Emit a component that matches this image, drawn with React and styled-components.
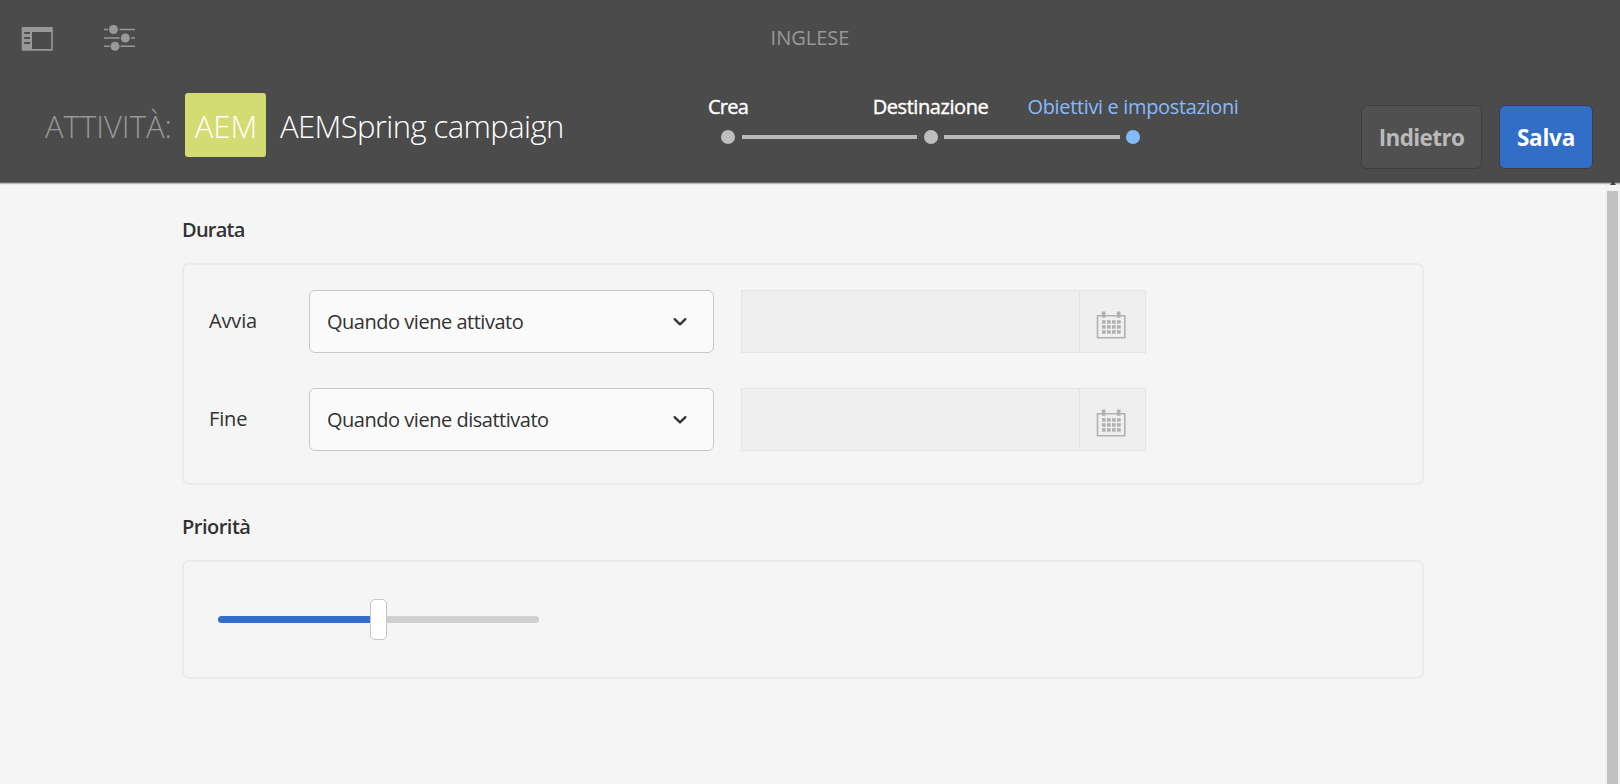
import React from "react";
import styled, { createGlobalStyle } from "styled-components";

const Global = createGlobalStyle`
  * { box-sizing: border-box; }
  body { margin: 0; background: #f5f5f5; font-family: "Open Sans", "Noto Sans", sans-serif; font-size: 20px; color: #323232; }
`;

const Page = styled.div`
  height: 784px;
  display: flex;
  flex-direction: column;
  overflow: hidden;
`;
const Header = styled.header`
  position: relative;
  height: 182px;
  flex: none;
  background: #4b4b4b;
  border-bottom: 1px solid #464646;
  box-shadow: 0 1px 0 rgba(0, 0, 0, 0.4), 0 2px 1px rgba(0, 0, 0, 0.25);
`;
const TopBar = styled.div`
  height: 76px;
  display: grid;
  grid-template-columns: 1fr auto 1fr;
  align-items: center;
  padding: 0 21px;
`;
const Tools = styled.div`
  display: flex;
  gap: 48px;
  height: 30px;
`;
const Label = styled.span`
  display: inline-block;
  white-space: nowrap;
  line-height: ${(p) => p.$line || 24}px;
  font-size: ${(p) => p.$size || 20}px;
  font-weight: ${(p) => p.$weight || 400};
  letter-spacing: ${(p) => p.$track || 0}px;
  color: ${(p) => p.$color || "inherit"};
`;
const TitleText = styled(Label)`
  padding-top: 2px;
  font-size: 31px;
  line-height: 44px;
  font-weight: 300;
`;
const StepText = styled(Label)`
  color: ${(p) => (p.$active ? "#86bbfb" : "#fff")};
  -webkit-text-stroke: ${(p) => (p.$active ? "0" : "0.4px #fff")};
`;
const TitleBar = styled.div`
  display: flex;
  height: 105px;
`;
const Title = styled.h1`
  display: flex;
  align-items: center;
  width: 708px;
  height: 64px;
  margin: 17px 0 0;
  padding-left: 45px;
`;
const Badge = styled.div`
  width: 81px;
  height: 64px;
  margin: 0 13.5px;
  border-radius: 3px;
  background: #d3dc72;
  display: flex;
  align-items: center;
  justify-content: center;
`;
const Steps = styled.ol`
  display: flex;
  list-style: none;
  margin: 19px 0 0;
  padding: 0;
  width: 632px;
`;
const Step = styled.li`
  width: 202.5px;
  flex: none;
`;
const StepLabel = styled.div`
  width: 40px;
  display: flex;
  justify-content: center;
`;
const Track = styled.div`
  display: flex;
  align-items: center;
  gap: 6.5px;
  height: 14px;
  margin: 11px 0 0 13px;
`;
const Dot = styled.i`
  flex: none;
  width: 14px;
  height: 14px;
  border-radius: 50%;
  background: ${(p) => (p.$active ? "#86bbfb" : "#bebebe")};
`;
const Rail = styled.i`
  flex: none;
  width: 175.5px;
  height: 4px;
  background: #b9b9b9;
`;
const Actions = styled.div`
  display: flex;
  gap: 17px;
  margin: 29px 0 0 21px;
`;
const Button = styled.button`
  width: ${(p) => (p.$primary ? 94 : 121)}px;
  height: 64px;
  padding: 2px 0 0;
  border: 1.5px solid #3e3e3e;
  border-radius: 6px;
  background: ${(p) => (p.$primary ? "#326ec8" : "#505050")};
  color: ${(p) => (p.$primary ? "#fff" : "#bababa")};
  font-family: inherit;
`;
const Body = styled.div`
  flex: 1;
  display: flex;
  justify-content: space-between;
`;
const Content = styled.main`
  width: 1424px;
  padding: 36px 0 0 182px;
`;
const Section = styled.section`
  margin-bottom: 30px;
`;
const Heading = styled.h2`
  display: flex;
  margin: 0 0 21px;
  height: 24px;
`;
const Panel = styled.div`
  height: ${(p) => p.$height}px;
  padding: ${(p) => p.$padding};
  border: 2px solid #ebebeb;
  border-radius: 7px;
`;
const FormRow = styled.div`
  display: flex;
  align-items: center;
  height: 63px;
  margin-bottom: 35px;
`;
const FieldLabel = styled.div`
  width: 100px;
  padding-bottom: 2px;
`;
const Select = styled.div`
  width: 405px;
  height: 63px;
  margin-right: 27px;
  padding: 0 26px 0 17px;
  display: flex;
  align-items: center;
  justify-content: space-between;
  border: 1.5px solid #c8c8c8;
  border-radius: 6px;
  background: #fafafa;
`;
const DateField = styled.div`
  width: 405px;
  height: 63px;
  display: flex;
  border: 1.5px solid #e4e4e4;
  background: #efefef;
`;
const DateInput = styled.div`
  flex: 1;
`;
const DateButton = styled.div`
  width: 66px;
  border-left: 1.5px solid #e4e4e4;
  padding: 20px 0 0 16px;
`;
const Slider = styled.div`
  width: 321px;
  height: 41px;
  display: flex;
  align-items: center;
`;
const Fill = styled.div`
  flex: 1;
  height: 7px;
  background: ${(p) => (p.$on ? "#326ec8" : "#cfcfcf")};
  border-radius: ${(p) => (p.$on ? "4px 0 0 4px" : "0 4px 4px 0")};
`;
const Thumb = styled.div`
  width: 17px;
  height: 41px;
  border: 1.5px solid #c6c6c6;
  border-radius: 5px;
  background: #fff;
`;
const Scrollbar = styled.div`
  width: 15px;
  padding: 9px 2px 0;
  background: #f1f1f1;
`;
const ScrollThumb = styled.div`
  height: 100%;
  background: #c1c1c1;
`;
const ScrollArrow = styled.svg`
  position: absolute;
  right: 3px;
  top: 181px;
`;

const RailIcon = () => (
  <svg width="33" height="30" viewBox="0 0 33 30">
    <path fill="#989898" fillRule="evenodd" d="M1.500 4h29.500a.8.8 0 0 1 .8.8v22.200a.8.8 0 0 1-.8.8h-29.500a.8.8 0 0 1-.8-.8v-22.200a.8.8 0 0 1 .8-.8zM11 9v17.100h19.200v-17.100zM3.200 9.100v1.800h5.800v-1.800zM3.200 14.100v1.800h5.800v-1.800zM3.200 19.100v1.800h5.800v-1.800z" />
  </svg>
);
const SlidersIcon = () => (
  <svg width="34" height="30" viewBox="0 0 34 30">
    <path stroke="#989898" strokeWidth="1.500" fill="none" d="M2 6.500h4M17.500 6.500h15.500M2 15h15.500M29 15h4M2 23.300h5.500M18.500 23.300h14.500" />
    <g fill="#989898">
      <circle cx="11.500" cy="6.500" r="4.500" />
      <circle cx="23.300" cy="15" r="4.500" />
      <circle cx="13" cy="23.300" r="4.500" />
    </g>
  </svg>
);
const Chevron = () => (
  <svg width="14" height="10" viewBox="0 0 14 10">
    <path d="M1.600 2.100 7 7.400 12.400 2.100" fill="none" stroke="#303030" strokeWidth="2.200" strokeLinecap="round" strokeLinejoin="round" />
  </svg>
);
const CalendarIcon = () => (
  <svg width="30" height="28" viewBox="0 0 30 28">
    <path d="M1.500 4.800h27.300v22H1.500z" fill="none" stroke="#b1b1b1" strokeWidth="1.600" />
    <path d="M7.600 .5v6.300M22.700 .5v6.300" stroke="#b1b1b1" strokeWidth="3.600" />
    {[9.2, 14.2, 19.2].map((y) =>
      [6, 11, 16, 21].map((x) => <rect key={`${x}-${y}`} x={x} y={y} width="3.700" height="3.500" fill="#b1b1b1" />)
    )}
  </svg>
);

const steps = [
  { name: "Crea", track: -0.75 },
  { name: "Destinazione", track: -0.43 },
  { name: "Obiettivi e impostazioni", track: -0.35, active: true },
];
const fields = [
  { name: "Avvia", value: "Quando viene attivato" },
  { name: "Fine", value: "Quando viene disattivato" },
];

export default function App() {
  return (
    <Page>
      <Global />
      <Header>
        <TopBar>
          <Tools>
            <RailIcon />
            <SlidersIcon />
          </Tools>
          <Label $color="#989898">INGLESE</Label>
        </TopBar>
        <TitleBar>
          <Title>
            <TitleText $color="#989898">ATTIVITÀ:</TitleText>
            <Badge>
              <TitleText $color="#fff">AEM</TitleText>
            </Badge>
            <TitleText $track={-0.58} $color="#fff">AEMSpring campaign</TitleText>
          </Title>
          <Steps>
            {steps.map((step) => (
              <Step key={step.name}>
                <StepLabel>
                  <StepText $track={step.track} $active={step.active}>{step.name}</StepText>
                </StepLabel>
                <Track>
                  <Dot $active={step.active} />
                  {!step.active && <Rail />}
                </Track>
              </Step>
            ))}
          </Steps>
          <Actions>
            <Button><Label $size={22.5} $line={28} $weight={700} $track={-0.6}>Indietro</Label></Button>
            <Button $primary><Label $size={22.5} $line={28} $weight={700} $track={-0.2}>Salva</Label></Button>
          </Actions>
        </TitleBar>
        <ScrollArrow width="8" height="4" viewBox="0 0 8 4">
          <path d="M4 0 7 4H1z" fill="#404040" />
        </ScrollArrow>
      </Header>
      <Body>
        <Content>
          <Section>
            <Heading><Label $weight={600} $track={-0.75}>Durata</Label></Heading>
            <Panel $height={222} $padding="25px 0 0 25px">
              {fields.map((field) => (
                <FormRow key={field.name}>
                  <FieldLabel><Label $track={-0.15}>{field.name}</Label></FieldLabel>
                  <Select>
                    <Label $track={-0.48}>{field.value}</Label>
                    <Chevron />
                  </Select>
                  <DateField>
                    <DateInput />
                    <DateButton><CalendarIcon /></DateButton>
                  </DateField>
                </FormRow>
              ))}
            </Panel>
          </Section>
          <Section>
            <Heading><Label $weight={600} $track={-0.5}>Priorità</Label></Heading>
            <Panel $height={119} $padding="37px 0 0 33.5px">
              <Slider>
                <Fill $on />
                <Thumb />
                <Fill />
              </Slider>
            </Panel>
          </Section>
        </Content>
        <Scrollbar><ScrollThumb /></Scrollbar>
      </Body>
    </Page>
  );
}
